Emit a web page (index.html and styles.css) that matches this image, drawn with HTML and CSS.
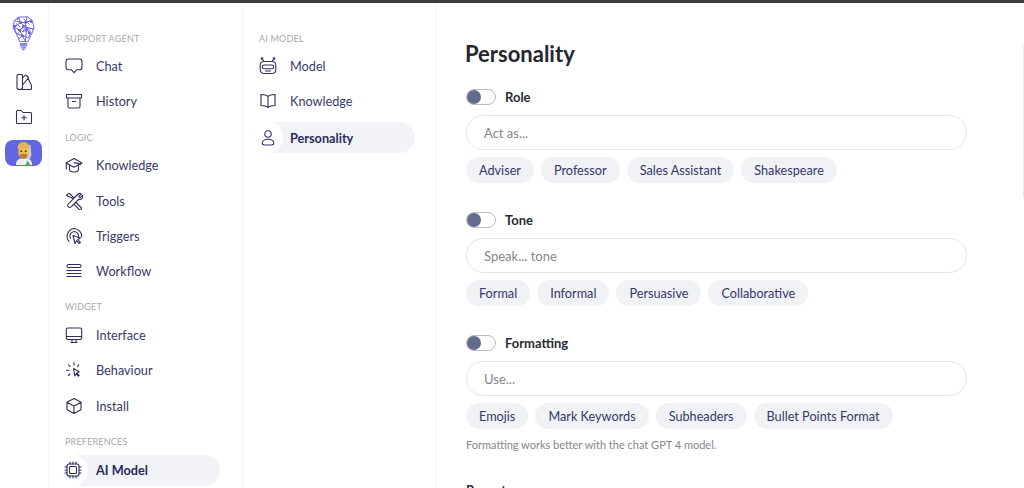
FILE: index.html
```html
<!DOCTYPE html>
<html lang="en">
<head>
<meta charset="utf-8">
<title>Personality</title>
<link rel="stylesheet" href="styles.css">
</head>
<body>
<div class="topbar"></div>
<div class="app">
  <aside class="rail">
    <svg class="logo" viewBox="0 0 24 36" fill="none" stroke="#6a63d8" stroke-width="1" stroke-linejoin="round">
      <path d="M7 1.500 16 1l5 4 2 7-2 6-3 6-1 3H8l-1-3-3-6-3-6 1.500-7z"/>
      <path d="M7 1.500 9 7l-7 5 6 3 3 6-4 3M16 1l-2 6 7-2-7 2-5 0 5 5 9 2-9-2-3 5 6-3 3 3-3 6-7-3M9 7l-6.500-2M14 7l1 8M8 15l6-5M2 12l3 7 6 2M11 21l3 6M15 15l-1 12M4 8l5 4M12 3l6 6M18 18l-4-8M6 19l5-7"/>
      <g fill="#6a63d8" stroke="none"><circle cx="9" cy="7" r="1.500"/><circle cx="14" cy="7" r="1.500"/><circle cx="8" cy="15" r="1.500"/><circle cx="15" cy="15" r="1.500"/><circle cx="11" cy="21" r="1.500"/><circle cx="18" cy="18" r="1.500"/><circle cx="3" cy="11" r="1.500"/><circle cx="20" cy="6" r="1.500"/><circle cx="12" cy="11" r="1.500"/><circle cx="6" cy="3" r="1.200"/></g>
      <path d="M8 29.500h8M8.500 31.500h7M9.500 33.500h5" stroke-width="1.400"/>
      <path d="M11 35.300h2" stroke-width="1.400"/>
    </svg>
    <button class="rail-btn" type="button" aria-label="Themes">
      <svg class="icon" viewBox="0 0 18 18"><path d="M2 2.500C2 1.800 2.500 1.500 3 1.500h3.500c.6 0 1 .4 1 1v12c0 1.200-1.200 2-2.800 2S2 15.700 2 14.500zM7.500 5 10 2.300c.4-.4 1-.4 1.400 0l1.700 1.700c.4.4.4 1 0 1.400L7.500 12M5 16.500h10.500c.6 0 1-.4 1-1v-2.800c0-.5-.2-.8-.5-1.200l-3-6.500"/></svg>
    </button>
    <button class="rail-btn" type="button" aria-label="New folder">
      <svg class="icon" viewBox="0 0 18 18"><path d="M1.500 3.500c0-.6.400-1 1-1h3.700l1.800 2h7.500c.6 0 1 .4 1 1v9c0 .6-.4 1-1 1h-13c-.6 0-1-.4-1-1zM9 7.500v4.500M6.800 9.800h4.500"/></svg>
    </button>
    <button class="avatar" type="button" aria-label="Agent">
      <svg viewBox="0 0 24 24" width="24" height="24">
        <path d="M4 24c0-5 3-7 8-7s8 2 8 7z" fill="#eef1f4"/>
        <path d="M13 4h5.500l1 10-2 5-4-3z" fill="#c9ced6"/>
        <rect x="6.500" y="5" width="10" height="12" rx="4.500" fill="#f6c445"/>
        <path d="M5.500 7.500C5.500 3 8.500 1 11.500 1s6 2 6 6.500z" fill="#eab15a"/>
        <path d="M7.500 13.500c1-1 7-1 8 0 0 3-2 4.500-4 4.500s-4-1.500-4-4.500z" fill="#b9803c"/>
        <circle cx="9.300" cy="10.300" r="1" fill="#4b3423"/><circle cx="13.700" cy="10.300" r="1" fill="#4b3423"/>
        <path d="M15.500 19.500l3 4.500h-5z" fill="#4caf6e"/>
      </svg>
    </button>
  </aside>

  <nav class="panel panel-primary">
    <div class="nav-section">
      <div class="nav-label">SUPPORT AGENT</div>
      <a class="nav-item"><svg class="icon" viewBox="0 0 18 18"><path d="M3.500 2h11C15.900 2 17 3 17 4.500v5.700c0 1.500-1.100 2.600-2.500 2.600h-2.800L9 15.700l-2.500-2.900h-3C2.100 12.800 1 11.700 1 10.200V4.500C1 3 2.100 2 3.500 2z"/></svg>Chat</a>
      <a class="nav-item"><svg class="icon" viewBox="0 0 18 18"><path d="M1.500 2.500h15v3.500h-15zM3 6v8.500c0 .8.500 1.500 1.500 1.500h9c1 0 1.500-.7 1.500-1.500V6M7.300 9.500h3.400"/></svg>History</a>
    </div>
    <div class="nav-section">
      <div class="nav-label">LOGIC</div>
      <a class="nav-item"><svg class="icon" viewBox="0 0 18 18"><path d="M9 2.500 1 7l8 4.300L17 7zM4.500 9.500v4c0 1.500 2 2.500 4.500 2.500s4.500-1 4.500-2.500v-4M1.300 7v6M15.500 8.500c-2-1.500-4.500-1.800-6.500-1.500"/></svg>Knowledge</a>
      <a class="nav-item"><svg class="icon" viewBox="0 0 18 18"><path d="M1.500 3.500 3.300 1.700c.4-.4 1-.4 1.400 0L9 6l4.200-4c1-.7 2.300-.6 3 0l-2.400 2.300 1.400 1.400L17.500 3.400c.4 1.200.2 2.400-.6 3.200-.8.800-2 1-3.100.6l-7.300 7.300c-.9 1-2.300 1.300-3.200.4-.9-.9-.7-2.300.3-3.200l5-5-5-2.300zM11 10.500l5 5c.6.600.5 1.400 0 1.900-.6.500-1.300.5-1.800 0l-4.800-4.800"/></svg>Tools</a>
      <a class="nav-item"><svg class="icon" viewBox="0 0 18 18"><path d="M4 14.500A8 8 0 0 1 9 1.500a7.800 7.800 0 0 1 7.700 8.500M5.500 11.500A4.800 4.800 0 0 1 9 4.500a4.800 4.800 0 0 1 4.700 5M8 8.500 10 16.500l1.500-2.800 2.700 2.800 1.200-1.200-2.700-2.700 2.700-1.500z"/></svg>Triggers</a>
      <a class="nav-item"><svg class="icon" viewBox="0 0 18 18"><path d="M3.500 2.500h11c1 0 1.500.7 1.500 1.500s-.5 1.500-1.500 1.500h-11C2.500 5.500 2 4.800 2 4s.5-1.500 1.500-1.500zM2 8.500h14M2 11.500h14M2 14.500h14"/></svg>Workflow</a>
    </div>
    <div class="nav-section">
      <div class="nav-label">WIDGET</div>
      <a class="nav-item"><svg class="icon" viewBox="0 0 18 18"><path d="M3 2h12c1 0 1.700.7 1.700 1.700v8.100c0 1-.7 1.700-1.700 1.700H3c-1 0-1.700-.7-1.700-1.700V3.700C1.300 2.700 2 2 3 2zM1.500 10.500h15M6 16.500h6M7 13.500v3M11 13.500v3"/></svg>Interface</a>
      <a class="nav-item"><svg class="icon" viewBox="0 0 18 18"><path d="M8.500 7.500 9.800 15l1.300-2.200 2.300 2.400.8-.8-2.300-2.300 2.300-1.300zM9 1.500v2.500M3.500 3.800 5 5.300M13.800 3.800 12.500 5.300M1.500 9.300H4M3.300 14.500 5 13"/></svg>Behaviour</a>
      <a class="nav-item"><svg class="icon" viewBox="0 0 18 18"><path d="M9 1.500 16 5.300v7.400L9 16.500l-7-3.800V5.300zM2 5.300 9 9l7-3.700M9 9v7.500"/></svg>Install</a>
    </div>
    <div class="nav-section">
      <div class="nav-label">PREFERENCES</div>
      <a class="nav-item is-active"><span class="nav-bubble"><svg class="icon" viewBox="0 0 18 18"><rect x="3" y="3" width="12" height="12" rx="2"/><rect x="5.500" y="5.500" width="7" height="7" rx="1"/><path d="M6 1v2M9 1v2M12 1v2M6 15v2M9 15v2M12 15v2M1 6h2M1 9h2M1 12h2M15 6h2M15 9h2M15 12h2"/></svg></span>AI Model</a>
    </div>
  </nav>

  <nav class="panel panel-secondary">
    <div class="nav-section">
      <div class="nav-label">AI MODEL</div>
      <a class="nav-item"><svg class="icon" viewBox="0 0 18 18"><path d="M5 4.500h8c2.200 0 3.800 1.600 3.800 3.800v4.400c0 2.200-1.600 3.800-3.800 3.800H5c-2.200 0-3.800-1.600-3.800-3.800V8.300C1.200 6.100 2.800 4.500 5 4.500zM3.300 2 5 4.500M14.700 2 13 4.500M5 8h8c1.100 0 1.800.8 1.800 1.800s-.7 1.900-1.800 1.900H5c-1.100 0-1.800-.9-1.800-1.900S3.900 8 5 8zM6.500 14h5"/><circle cx="3" cy="1.500" r=".8"/><circle cx="15" cy="1.500" r=".8"/></svg>Model</a>
      <a class="nav-item"><svg class="icon" viewBox="0 0 18 18"><path d="M9 4.500C7.500 3 5 2.500 2 2.500v11c3 0 5.500.5 7 2 1.500-1.500 4-2 7-2v-11c-3 0-5.500.5-7 2zM9 4.500v11"/></svg>Knowledge</a>
      <a class="nav-item is-active"><span class="nav-bubble"><svg class="icon" viewBox="0 0 18 18"><circle cx="9" cy="5" r="3.200"/><path d="M9 10.300c-3.500 0-5.800 1.700-5.800 4 0 1.200.8 1.700 2 1.700h7.600c1.200 0 2-.5 2-1.700 0-2.300-2.300-4-5.800-4z"/></svg></span>Personality</a>
    </div>
  </nav>

  <main class="content">
    <h1 class="title">Personality</h1>

    <section class="field">
      <div class="field-head"><span class="toggle"><span class="knob"></span></span><span class="field-name">Role</span></div>
      <input class="text-input" type="text" placeholder="Act as...">
      <div class="chips"><span class="chip">Adviser</span><span class="chip">Professor</span><span class="chip">Sales Assistant</span><span class="chip">Shakespeare</span></div>
    </section>

    <section class="field">
      <div class="field-head"><span class="toggle"><span class="knob"></span></span><span class="field-name">Tone</span></div>
      <input class="text-input" type="text" placeholder="Speak... tone">
      <div class="chips"><span class="chip">Formal</span><span class="chip">Informal</span><span class="chip">Persuasive</span><span class="chip">Collaborative</span></div>
    </section>

    <section class="field">
      <div class="field-head"><span class="toggle"><span class="knob"></span></span><span class="field-name">Formatting</span></div>
      <input class="text-input" type="text" placeholder="Use...">
      <div class="chips"><span class="chip">Emojis</span><span class="chip">Mark Keywords</span><span class="chip">Subheaders</span><span class="chip">Bullet Points Format</span></div>
      <p class="note">Formatting works better with the chat GPT 4 model.</p>
    </section>

    <div class="field-name next">Recent messages</div>
  </main>
  <div class="scrollbar"></div>
</div>
</body>
</html>
```
FILE: styles.css
```css
* { box-sizing: border-box; }
html, body { height: 100%; }
body {
  margin: 0;
  overflow: hidden;
  background: #fff;
  font-family: Lato, "Noto Sans", sans-serif;
  color: #2f2f5f;
  display: flex;
  flex-direction: column;
}
.topbar { height: 3px; background: #3d3d3d; flex: none; }
.app { flex: 1; min-height: 0; display: flex; overflow: hidden; position: relative; }

.rail {
  width: 49px;
  flex: none;
  border-right: 1px solid #f3f3f6;
  display: flex;
  flex-direction: column;
  align-items: center;
  padding-right: 1px;
  padding-top: 12px;
}
.logo { width: 23px; height: 36px; margin-bottom: 13px; }
.rail-btn {
  width: 24px;
  height: 35px;
  padding: 0;
  border: 0;
  background: none;
  display: flex;
  align-items: center;
  justify-content: center;
}
.avatar {
  width: 37px;
  height: 26px;
  margin-top: 6px;
  padding: 0;
  border: 0;
  border-radius: 8px;
  background: #6366e1;
  display: flex;
  align-items: center;
  justify-content: center;
}
.icon {
  width: 18px;
  height: 18px;
  flex: none;
  fill: none;
  stroke: #2f2f5f;
  stroke-width: 1.1;
  stroke-linecap: round;
  stroke-linejoin: round;
}

.panel {
  width: 194px;
  flex: none;
  border-right: 1px solid #f3f3f6;
  padding: 23.5px 0 0 16px;
}
.nav-section { margin-bottom: 6.5px; }
.nav-label {
  height: 22px;
  line-height: 23px;
  font-size: 9px;
  letter-spacing: .2px;
  color: #a9a9ae;
}
.nav-item {
  height: 35.3px;
  display: flex;
  align-items: center;
  gap: 13px;
  font-size: 12.7px;
  color: #39396a;
}
.nav-item.is-active {
  width: 162px;
  height: 31px;
  margin: 3px 0 0 -7px;
  gap: 8px;
  border-radius: 16px;
  background: #f1f3f6;
  font-weight: 700;
  color: #2a2a5e;
}
.nav-bubble {
  width: 30px;
  height: 31px;
  border-radius: 50%;
  background: #fff;
  display: flex;
  align-items: center;
  justify-content: center;
}
.panel-secondary .nav-item.is-active { margin-left: -6px; gap: 7px; }

.content { flex: 1; min-width: 0; padding: 0 0 0 29px; }
.title {
  margin: 0 0 0 -1px;
  padding-top: 37px;
  height: 79px;
  font-size: 22px;
  line-height: 28px;
  font-weight: 700;
  color: #26262e;
}
.field { height: 123px; }
.field-head { height: 33px; display: flex; align-items: center; gap: 9px; padding-bottom: 3px; }
.toggle {
  width: 30px;
  height: 16px;
  border: 1px solid #b8bcc8;
  border-radius: 8px;
  background: #fff;
  display: flex;
}
.knob { width: 14px; height: 14px; border-radius: 50%; background: #636c8c; }
.field-name { font-size: 13px; font-weight: 700; color: #2b2b33; }
.text-input {
  display: block;
  width: 501px;
  height: 35px;
  padding: 0 17px;
  border: 1px solid #e4e5e8;
  border-radius: 18px;
  background: #fff;
  font: 13px Lato, sans-serif;
  outline: none;
}
.text-input::placeholder { color: #85858c; opacity: 1; }
.chips { display: flex; gap: 7px; margin-top: 7px; }
.chip {
  height: 26px;
  line-height: 26px;
  padding: 0 13px;
  border-radius: 13px;
  background: #f1f2f5;
  font-size: 12.7px;
  color: #36366a;
}
.note { margin: 9px 0 0; font-size: 11px; line-height: 14px; color: #85858c; }
.next { margin-top: 31px; line-height: 16px; }
.scrollbar {
  position: absolute;
  right: 0;
  top: 42px;
  width: 1px;
  height: 153px;
  background: #e8e9f5;
}
```
